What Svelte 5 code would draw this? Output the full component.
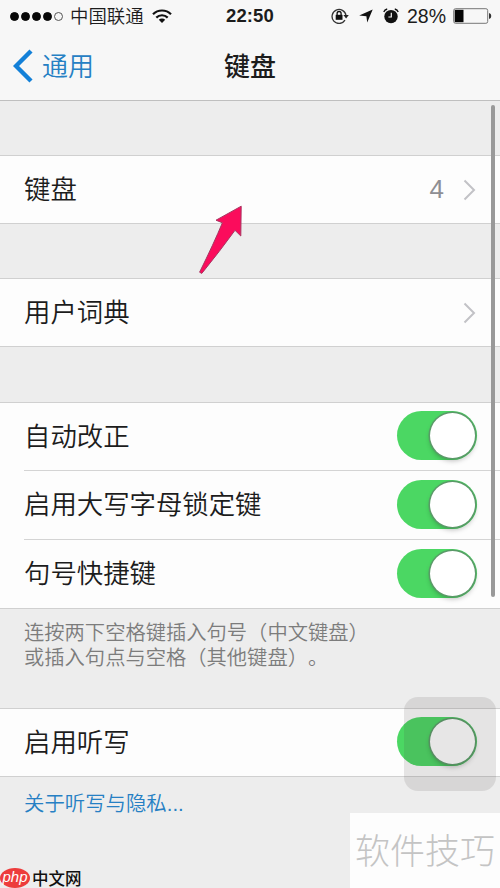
<script>
    const groups = [
        { rows: [{ label: "键盘", value: "4" }] },
        { rows: [{ label: "用户词典" }] },
        {
            rows: [
                { label: "自动改正", toggle: true },
                { label: "启用大写字母锁定键", toggle: true },
                { label: "句号快捷键", toggle: true },
            ],
            note: ["连按两下空格键插入句号（中文键盘）", "或插入句点与空格（其他键盘）。"],
        },
        { rows: [{ label: "启用听写", toggle: true }], link: "关于听写与隐私..." },
    ];
    const signal = [1, 1, 1, 1, 0];
</script>

<div class="screen" lang="zh-CN">
    <header>
        <div class="status">
            <div class="carrier">
                <span class="dots">
                    {#each signal as on}<i class:on></i>{/each}
                </span>
                <span class="operator">中国联通</span>
                <svg class="wifi" width="20" height="14" viewBox="0 0 20 14">
                    <path d="M1 5.2a12.8 12.8 0 0 1 18 0" fill="none" stroke="#111" stroke-width="2.2" />
                    <path d="M4.3 8.6a8.1 8.1 0 0 1 11.4 0" fill="none" stroke="#111" stroke-width="2.2" />
                    <path d="M10 14 6.8 10.8a4.5 4.5 0 0 1 6.4 0z" fill="#111" />
                </svg>
            </div>
            <b class="time">22:50</b>
            <div class="indicators">
                <svg class="lock" width="19" height="16" viewBox="0 0 19 16">
                    <path d="M14 12.2A7 7 0 1 1 15 7.5" fill="none" stroke="#333" stroke-width="1.3" />
                    <path d="M12.4 7h5.4l-2.7 3.4z" fill="#222" />
                    <rect x="4.7" y="6.8" width="6.8" height="5" fill="#111" />
                    <path d="M6.1 7V5.5a2 2 0 0 1 4 0V7" fill="none" stroke="#111" stroke-width="1.3" />
                </svg>
                <svg class="location" width="14" height="14" viewBox="0 0 14 14">
                    <path d="M13.7.5 8.2 13.6 7.4 7.2.2 6.6z" fill="#111" />
                </svg>
                <svg class="alarm" width="16" height="16" viewBox="0 0 16 16">
                    <circle cx="8" cy="8.6" r="6.7" fill="#111" />
                    <path d="M.8 4Q1.5 1.7 4.2 1M15.2 4Q14.5 1.7 11.8 1" fill="none" stroke="#111" stroke-width="1.3" />
                    <path d="M8.3 4.8v4.2H5.4" fill="none" stroke="#f7f7f7" stroke-width="1.2" />
                </svg>
                <span class="percent">28%</span>
                <svg class="battery" width="39" height="16" viewBox="0 0 39 16">
                    <rect x=".7" y=".7" width="34" height="14.6" rx="1.8" fill="none" stroke="#777" />
                    <rect x="1.7" y="1.8" width="8.8" height="12.4" fill="#050505" />
                    <path d="M36 5q2.3.6 2.3 3T36 11z" fill="#333" />
                </svg>
            </div>
        </div>
        <nav>
            <div class="back">
                <svg width="20" height="34" viewBox="0 0 20 34">
                    <path d="M18 2 3 17l15 15" fill="none" stroke="#1380d8" stroke-width="4.4" />
                </svg>
                <span>通用</span>
            </div>
            <h1>键盘</h1>
        </nav>
    </header>

    <main>
        {#each groups as group}
            <section>
                <div class="rows">
                    {#each group.rows as row}
                        <div class="row">
                            <span class="label">{row.label}</span>
                            {#if row.toggle}
                                <span class="toggle"><i></i></span>
                            {:else}
                                {#if row.value}<span class="value">{row.value}</span>{/if}
                                <svg class="chevron" width="13" height="22" viewBox="0 0 13 22">
                                    <path d="m1.5 1.5 9.5 9.5-9.5 9.5" fill="none" stroke="#c2c2c6" stroke-width="2" />
                                </svg>
                            {/if}
                        </div>
                    {/each}
                </div>
                {#if group.note}
                    <p class="note">
                        {#each group.note as line}<span>{line}</span>{/each}
                    </p>
                {/if}
                {#if group.link}<a class="link" href="#privacy">{group.link}</a>{/if}
            </section>
        {/each}
    </main>

    <div class="scrollbar"></div>
    <svg class="arrow" width="52" height="76" viewBox="0 0 52 76">
        <path d="M45.2 5.2 20 19.2l6.4 2.6Q18 42 3.6 71.2l2.2 1.2Q24 50 39 29.3l5.8 5.7z" fill="#fb0c5c" stroke="#a83561" />
    </svg>
    <div class="assistive"></div>
    <div class="watermark">软件技巧</div>
    <div class="site"><span class="php">php</span><span class="name">中文网</span></div>
</div>

<style>
    :global(body) {
        margin: 0;
    }

    .screen {
        position: relative;
        width: 500px;
        height: 888px;
        overflow: hidden;
        background: #ededed;
        color: #1c1c1c;
        font-family: "Liberation Sans", "Noto Sans CJK SC", sans-serif;
        font-weight: 350;
        text-spacing-trim: space-all;
    }

    header {
        box-sizing: border-box;
        height: 101px;
        background: #f7f7f7;
        border-bottom: 1px solid #bfbfbf;
    }

    .status,
    nav {
        display: grid;
        grid-template-columns: 1fr auto 1fr;
        align-items: center;
    }

    .status {
        height: 32px;
    }

    .carrier,
    .indicators,
    .dots,
    .back {
        display: flex;
        align-items: center;
    }

    .carrier {
        padding-left: 10px;
    }

    .dots {
        gap: 2px;
    }

    .dots i {
        box-sizing: border-box;
        width: 9px;
        height: 9px;
        border: 1px solid #555;
        border-radius: 50%;
    }

    .dots .on {
        background: #080808;
        border-color: #080808;
    }

    .operator {
        margin: 0 8px 0 7px;
        padding-top: 2px;
        font-size: 18.4px;
        line-height: 24px;
    }

    .time {
        font-size: 18.5px;
        font-weight: 700;
        letter-spacing: 0.1px;
    }

    .indicators {
        justify-content: flex-end;
        padding-right: 8px;
    }

    .location {
        margin-left: 9px;
    }

    .alarm {
        margin-left: 10px;
    }

    .percent {
        margin: 0 7px 0 8px;
        font-size: 19.5px;
    }

    nav {
        height: 68px;
    }

    .back {
        gap: 9px;
        padding-left: 13px;
        color: #2680c4;
        font-size: 26px;
    }

    h1 {
        margin: 0;
        font-size: 26px;
        font-weight: 500;
    }

    .back span,
    h1 {
        padding-top: 2px;
        line-height: 36px;
    }

    section {
        padding-top: 54px;
    }

    section:nth-child(3) {
        padding-top: 55px;
    }

    section:nth-child(4) {
        padding-top: 37px;
    }

    .rows {
        background: #fdfdfd;
        border-top: 1px solid #d0d0d0;
        border-bottom: 1px solid #d0d0d0;
    }

    .row {
        display: flex;
        align-items: center;
        box-sizing: border-box;
        height: 67px;
        margin-left: 24px;
        padding-right: 24px;
    }

    .row + .row {
        height: 69px;
        border-top: 1px solid #d4d4d4;
    }

    .label {
        flex: 1;
        font-size: 26.4px;
        line-height: 36px;
    }

    .value {
        margin-right: 19px;
        color: #8e8e93;
        font-size: 26px;
    }

    .toggle {
        display: flex;
        justify-content: flex-end;
        box-sizing: border-box;
        width: 80px;
        height: 49px;
        margin: 0 -0.5px 2px 0;
        padding: 2px;
        border-radius: 25px;
        background: #4bd763;
    }

    .toggle i {
        width: 45px;
        height: 45px;
        border-radius: 50%;
        background: #fff;
        box-shadow: 0 0 0 1.5px #5a9a68, 0 3px 5px rgba(0, 0, 0, 0.25);
    }

    .note {
        height: 50px;
        margin: 0;
        padding: 12px 24px 0;
        color: #7c7c7c;
        font-size: 20.3px;
        line-height: 25px;
    }

    .note span {
        display: block;
        white-space: nowrap;
    }

    .link {
        display: block;
        padding: 13px 24px;
        color: #2680c4;
        font-size: 20.4px;
        line-height: 28px;
        text-decoration: none;
    }

    .scrollbar {
        position: absolute;
        top: 105px;
        left: 491px;
        width: 4px;
        height: 492px;
        border-radius: 2px;
        background: #999;
    }

    .arrow {
        position: absolute;
        top: 201px;
        left: 196px;
    }

    .assistive {
        position: absolute;
        top: 697px;
        left: 404px;
        width: 92px;
        height: 94px;
        border-radius: 14px;
        background: rgba(70, 60, 65, 0.13);
    }

    .watermark {
        position: absolute;
        top: 813px;
        left: 350px;
        box-sizing: border-box;
        width: 150px;
        height: 75px;
        padding: 1px 0 0 5px;
        background: #fdfdfd;
        color: #c4c4c4;
        font-size: 35px;
        font-weight: 300;
        line-height: 76px;
        white-space: nowrap;
    }

    .site {
        position: absolute;
        bottom: 0;
        left: 0;
        display: flex;
        align-items: center;
        height: 20px;
    }

    .php {
        width: 30px;
        height: 20px;
        border-radius: 50%;
        background: #ed3c3c;
        color: #fff;
        font-size: 15px;
        font-style: italic;
        line-height: 17px;
        text-align: center;
    }

    .name {
        margin: 1px 0 0 2px;
        color: #111;
        font-size: 16.5px;
        font-weight: 500;
        line-height: 20px;
    }
</style>
